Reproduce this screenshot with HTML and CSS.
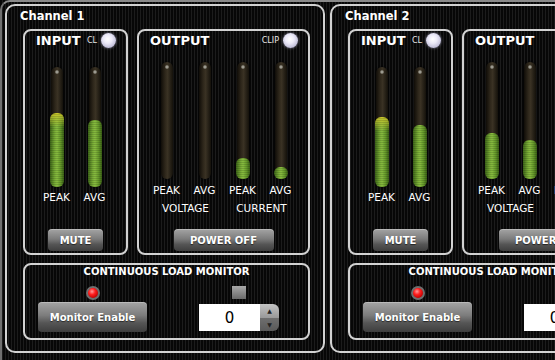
FILE: index.html
```html
<!DOCTYPE html>
<html lang="en">
<head>
  <meta charset="UTF-8">
  <meta name="viewport" content="width=device-width, initial-scale=1.0">
  <title>Amplifier Channels</title>
  <link rel="stylesheet" href="styles.css">
</head>
<body>
  <div class="rack">

    <!-- Channel 1 -->
    <section class="channel">
      <div class="channel-title">Channel 1</div>
      <div class="boxes">
        <div class="box input-box">
          <div class="box-head">
            <span class="box-title">INPUT</span>
            <span class="clip">CL<span class="led"></span></span>
          </div>
          <div class="meters">
            <div class="meter">
              <div class="tube"><div class="fill hot" style="height: 62%"></div></div>
              <div class="label">PEAK</div>
            </div>
            <div class="meter">
              <div class="tube"><div class="fill" style="height: 56%"></div></div>
              <div class="label">AVG</div>
            </div>
          </div>
          <div class="btn mute">MUTE</div>
        </div>

        <div class="box output-box">
          <div class="box-head">
            <span class="box-title">OUTPUT</span>
            <span class="clip">CLIP<span class="led"></span></span>
          </div>
          <div class="out-meters">
            <div class="group">
              <div class="pair">
                <div class="meter">
                  <div class="tube short"></div>
                  <div class="label">PEAK</div>
                </div>
                <div class="meter">
                  <div class="tube short"></div>
                  <div class="label">AVG</div>
                </div>
              </div>
              <div class="group-label">VOLTAGE</div>
            </div>
            <div class="group">
              <div class="pair">
                <div class="meter">
                  <div class="tube short"><div class="fill" style="height: 18%"></div></div>
                  <div class="label">PEAK</div>
                </div>
                <div class="meter">
                  <div class="tube short"><div class="fill" style="height: 10%"></div></div>
                  <div class="label">AVG</div>
                </div>
              </div>
              <div class="group-label">CURRENT</div>
            </div>
          </div>
          <div class="btn power">POWER OFF</div>
        </div>
      </div>

      <div class="box monitor">
        <div class="monitor-title">CONTINUOUS LOAD MONITOR</div>
        <div class="monitor-row">
          <div class="enable-col">
            <span class="red-led"></span>
            <div class="btn enable">Monitor Enable</div>
          </div>
          <div class="value-col">
            <span class="square"></span>
            <div class="spin">
              <div class="num">0</div>
              <div class="arrows"><span>&#9650;</span><span>&#9660;</span></div>
            </div>
          </div>
        </div>
      </div>
    </section>

    <!-- Channel 2 -->
    <section class="channel">
      <div class="channel-title">Channel 2</div>
      <div class="boxes">
        <div class="box input-box">
          <div class="box-head">
            <span class="box-title">INPUT</span>
            <span class="clip">CL<span class="led"></span></span>
          </div>
          <div class="meters">
            <div class="meter">
              <div class="tube"><div class="fill hot" style="height: 58%"></div></div>
              <div class="label">PEAK</div>
            </div>
            <div class="meter">
              <div class="tube"><div class="fill" style="height: 52%"></div></div>
              <div class="label">AVG</div>
            </div>
          </div>
          <div class="btn mute">MUTE</div>
        </div>

        <div class="box output-box">
          <div class="box-head">
            <span class="box-title">OUTPUT</span>
            <span class="clip">CLIP<span class="led"></span></span>
          </div>
          <div class="out-meters">
            <div class="group">
              <div class="pair">
                <div class="meter">
                  <div class="tube short"><div class="fill" style="height: 39%"></div></div>
                  <div class="label">PEAK</div>
                </div>
                <div class="meter">
                  <div class="tube short"><div class="fill" style="height: 33%"></div></div>
                  <div class="label">AVG</div>
                </div>
              </div>
              <div class="group-label">VOLTAGE</div>
            </div>
            <div class="group">
              <div class="pair">
                <div class="meter">
                  <div class="tube short"><div class="fill" style="height: 20%"></div></div>
                  <div class="label">PEAK</div>
                </div>
                <div class="meter">
                  <div class="tube short"><div class="fill" style="height: 12%"></div></div>
                  <div class="label">AVG</div>
                </div>
              </div>
              <div class="group-label">CURRENT</div>
            </div>
          </div>
          <div class="btn power">POWER OFF</div>
        </div>
      </div>

      <div class="box monitor">
        <div class="monitor-title">CONTINUOUS LOAD MONITOR</div>
        <div class="monitor-row">
          <div class="enable-col">
            <span class="red-led"></span>
            <div class="btn enable">Monitor Enable</div>
          </div>
          <div class="value-col">
            <span class="square"></span>
            <div class="spin">
              <div class="num">0</div>
              <div class="arrows"><span>&#9650;</span><span>&#9660;</span></div>
            </div>
          </div>
        </div>
      </div>
    </section>

  </div>
</body>
</html>
```

FILE: styles.css
```css
body {
  margin: 0;
  width: 555px;
  height: 360px;
  overflow: hidden;
  font-family: "DejaVu Sans", Verdana, sans-serif;
  color: #fff;
  background: repeating-linear-gradient(90deg, #070707 0, #070707 2px, #1c1c1c 2px, #1c1c1c 3px);
}

/* Outer frame */
.rack {
  display: flex;
  align-items: flex-start;
  gap: 5px;
  width: max-content;
  height: 360px;
  box-sizing: border-box;
  border-top: 2px solid #8a8a8a;
  border-left: 2px solid #707070;
  border-top-left-radius: 10px;
  padding: 2px 0 0 3px;
}

.channel {
  flex: none;
  border: 2px solid #d2d2d2;
  border-radius: 10px;
  padding: 3px 13px 11px 16px;
}

.channel-title {
  font-size: 11.5px;
  font-weight: bold;
  line-height: 14px;
  margin-left: -3px;
}

.boxes {
  display: flex;
  gap: 9px;
  margin-top: 6px;
}

.box {
  border: 2px solid #d2d2d2;
  border-radius: 8px;
  box-sizing: border-box;
}

.input-box,
.output-box {
  height: 226px;
  display: flex;
  flex-direction: column;
  align-items: center;
}

.input-box {
  width: 105px;
}

.output-box {
  width: 173px;
}

.box-head {
  align-self: stretch;
  height: 18px;
  display: flex;
  align-items: center;
  justify-content: space-between;
  padding: 0 10px 0 11px;
}

.box-title {
  font-size: 13px;
  font-weight: bold;
}

.clip {
  display: flex;
  align-items: center;
  gap: 4px;
  font-size: 8px;
  color: #e8e8e8;
}

.led {
  width: 15px;
  height: 15px;
  border-radius: 50%;
  background: radial-gradient(circle at 45% 40%, #ffffff 0, #eceaf8 35%, #bdbad6 75%, #8e8ca8 100%);
  box-shadow: 0 0 3px rgba(220, 220, 255, 0.6);
}

/* Meters */
.meters,
.pair,
.out-meters {
  display: flex;
  gap: 8px;
}

.meters {
  margin-top: 18px;
}

.out-meters {
  margin-top: 13px;
}

.meter,
.group {
  display: flex;
  flex-direction: column;
  align-items: center;
}

.meter {
  width: 30px;
}

.tube {
  position: relative;
  width: 12px;
  height: 120px;
  border-radius: 6px;
  display: flex;
  flex-direction: column;
  justify-content: flex-end;
  background: linear-gradient(90deg, #100d08 0, #2e271b 35%, #3a3224 55%, #14110b 100%);
  box-shadow: 0 0 2px #000;
}

.tube::before {
  content: "";
  position: absolute;
  top: 3px;
  left: 4px;
  width: 4px;
  height: 4px;
  border-radius: 50%;
  background: radial-gradient(circle, #b8b8b0 0, #6a6558 70%, transparent 100%);
}

.tube.short {
  height: 117px;
}

.fill {
  margin: 0 -1px;
  border-radius: 6px;
  background:
    repeating-linear-gradient(0deg, rgba(0, 0, 0, 0.14) 0, rgba(0, 0, 0, 0.14) 1px, transparent 1px, transparent 2px),
    linear-gradient(90deg, #3c6418 0, #7aae36 35%, #88bc40 50%, #669a2a 75%, #3a5f16 100%);
}

.fill.hot {
  background:
    repeating-linear-gradient(0deg, rgba(0, 0, 0, 0.14) 0, rgba(0, 0, 0, 0.14) 1px, transparent 1px, transparent 2px),
    linear-gradient(180deg, rgba(210, 200, 40, 0.9) 0, rgba(190, 196, 48, 0.6) 6px, transparent 14px),
    linear-gradient(90deg, #3c6418 0, #7aae36 35%, #88bc40 50%, #669a2a 75%, #3a5f16 100%);
}

.label,
.group-label {
  font-size: 10.5px;
  line-height: 12px;
  white-space: nowrap;
}

.input-box .label {
  margin-top: 4px;
}

.output-box .label {
  margin-top: 5px;
}

.group-label {
  margin-top: 6px;
}

/* Buttons */
.btn {
  display: flex;
  align-items: center;
  justify-content: center;
  height: 22px;
  border-radius: 4px;
  font-size: 10px;
  font-weight: bold;
  color: #fff;
  text-shadow: 0 1px 1px rgba(0, 0, 0, 0.6);
  background: linear-gradient(180deg, #a4a4a4 0, #7c7c7c 45%, #555 70%, #3e3e3e 100%);
  box-shadow: inset 0 1px 0 rgba(255, 255, 255, 0.25);
}

.input-box .btn,
.output-box .btn {
  margin-top: auto;
  margin-bottom: 2px;
}

.mute {
  width: 55px;
}

.power {
  width: 100px;
}

/* Continuous load monitor */
.monitor {
  width: 287px;
  height: 77px;
  margin-top: 8px;
  padding-top: 1px;
}

.monitor-title {
  text-align: center;
  font-size: 10px;
  font-weight: bold;
  line-height: 12px;
}

.monitor-row {
  display: flex;
  justify-content: space-between;
  align-items: flex-start;
  padding: 8px 29px 0 13px;
}

.enable-col,
.value-col {
  display: flex;
  flex-direction: column;
  align-items: center;
}

.enable-col {
  gap: 2px;
}

.value-col {
  gap: 5px;
}

.red-led {
  width: 10px;
  height: 10px;
  border-radius: 50%;
  border: 2px solid #6e6e6e;
  background: radial-gradient(circle at 40% 35%, #ff9a9a 0, #ff2020 35%, #c00000 75%, #7a0000 100%);
}

.enable {
  width: 109px;
  height: 30px;
  font-size: 10px;
}

.square {
  width: 14px;
  height: 13px;
  background: linear-gradient(180deg, #a8a8a8, #6a6a6a);
}

.spin {
  display: flex;
  height: 27px;
}

.num {
  width: 61px;
  display: flex;
  align-items: center;
  justify-content: center;
  background: #fff;
  color: #000;
  font-size: 15px;
}

.arrows {
  width: 19px;
  display: flex;
  flex-direction: column;
  align-items: center;
  justify-content: space-around;
  border-radius: 0 6px 6px 0;
  background: linear-gradient(180deg, #c4c4c4 0, #9a9a9a 50%, #6e6e6e 52%, #5a5a5a 100%);
  font-size: 6px;
  color: #222;
}
```
